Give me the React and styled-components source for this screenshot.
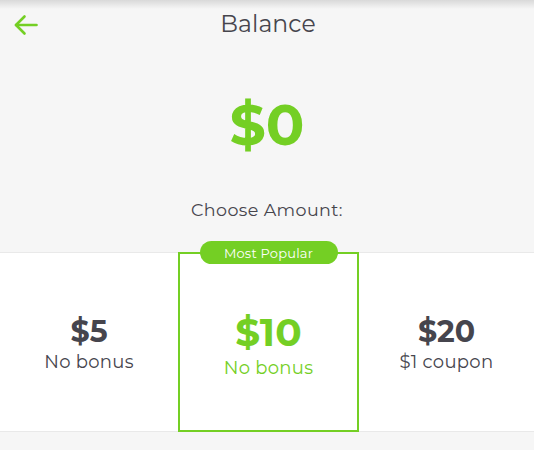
import React from "react";
import styled, { createGlobalStyle } from "styled-components";

const GREEN = "#74cf24";
const DARK = "#46454d";

const Global = createGlobalStyle`
  html, body { margin: 0; padding: 0; background: #f6f6f6; }
  body { font-family: Montserrat, "Open Sans", "Noto Sans", sans-serif; color: ${DARK}; }
  * { box-sizing: border-box; }
`;

const Page = styled.div`
  width: 534px;
  height: 450px;
  overflow: hidden;
  display: flex;
  flex-direction: column;
  background: linear-gradient(#d9d9d9 0px, #f6f6f6 9px);
`;

const Header = styled.header`
  position: relative;
  height: 46px;
  display: flex;
  align-items: center;
  justify-content: center;
`;

const Back = styled.button`
  position: absolute;
  left: 13px;
  top: 13px;
  width: 26px;
  height: 24px;
  padding: 0;
  border: none;
  background: none;
  display: flex;
  align-items: center;
  justify-content: center;
`;

const Title = styled.h1`
  margin: 0;
  font-size: 23.5px;
  font-weight: 400;
  color: ${DARK};
  letter-spacing: 0.1px;
  padding-left: 2px;
`;

const Amount = styled.div`
  margin-top: 47px;
  text-align: center;
  font-size: 57px;
  line-height: 64px;
  font-weight: 700;
  color: ${GREEN};
`;

const Prompt = styled.div`
  margin-top: 42px;
  text-align: center;
  font-size: 17.5px;
  line-height: 22px;
  color: ${DARK};
  letter-spacing: 0.4px;
`;

const Options = styled.div`
  margin-top: 31px;
  display: grid;
  grid-template-columns: 178px 181px 1fr;
  height: 179px;
`;

const Card = styled.div`
  position: relative;
  background: #fff;
  display: flex;
  flex-direction: column;
  align-items: center;
  justify-content: center;
  border-top: 1px solid #e9e9e9;
  border-bottom: 1px solid #e9e9e9;
  padding-top: 6px;
  ${(p) =>
    p.$popular &&
    `
    border: 2px solid ${GREEN};
    height: 180px;
    padding-top: 8px;
  `}
`;

const Badge = styled.div`
  position: absolute;
  top: -13px;
  left: 50%;
  transform: translateX(-50%);
  width: 138px;
  height: 23px;
  border-radius: 12px;
  background: ${GREEN};
  color: #fff;
  font-size: 13px;
  display: flex;
  align-items: center;
  justify-content: center;
  letter-spacing: 0.2px;
`;

const Price = styled.div`
  font-weight: 700;
  font-size: ${(p) => (p.$popular ? "39px" : "30px")};
  line-height: ${(p) => (p.$popular ? "40px" : "32px")};
  color: ${(p) => (p.$popular ? GREEN : DARK)};
`;

const Bonus = styled.div`
  margin-top: ${(p) => (p.$popular ? "4px" : "2px")};
  font-size: 18px;
  line-height: 24px;
  letter-spacing: 0.3px;
  color: ${(p) => (p.$popular ? GREEN : DARK)};
`;

const options = [
  { price: "$5", bonus: "No bonus" },
  { price: "$10", bonus: "No bonus", popular: true },
  { price: "$20", bonus: "$1 coupon" },
];

export default function App() {
  return (
    <>
      <Global />
      <Page>
        <Header>
          <Back aria-label="Back">
            <svg width="24" height="22" viewBox="0 0 24 22" fill="none" stroke={GREEN} strokeWidth="2.6" strokeLinecap="round" strokeLinejoin="round">
              <path d="M22.5 11H2" />
              <path d="M10.5 2.5L2 11l8.5 8.5" />
            </svg>
          </Back>
          <Title>Balance</Title>
        </Header>
        <Amount>$0</Amount>
        <Prompt>Choose Amount:</Prompt>
        <Options>
          {options.map((o) => (
            <Card key={o.price} $popular={o.popular}>
              {o.popular && <Badge>Most Popular</Badge>}
              <Price $popular={o.popular}>{o.price}</Price>
              <Bonus $popular={o.popular}>{o.bonus}</Bonus>
            </Card>
          ))}
        </Options>
      </Page>
    </>
  );
}
